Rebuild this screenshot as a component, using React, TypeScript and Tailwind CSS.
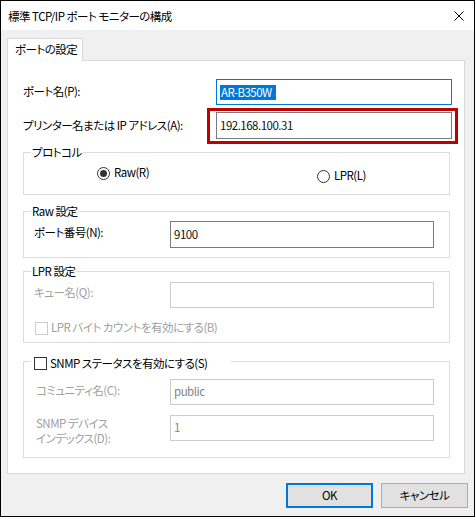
import React from "react";

const Input = ({ w, h, value, disabled, selected }: { w: string; h: string; value?: string; disabled?: boolean; selected?: boolean }) => (
  <div
    className={`${w} ${h} bg-white flex items-center pl-[3px] ${
      selected ? "border border-[#0078d7]" : disabled ? "border border-[#cccccc]" : "border border-[#7a7a7a]"
    }`}
  >
    {selected ? (
      <span className="bg-[#0078d7] text-white leading-[15px] pr-[4px] pl-[1px]">{value}</span>
    ) : (
      <span className={disabled ? "text-[#838383]" : "text-[#111]"}>{value}</span>
    )}
  </div>
);

const Radio = ({ checked }: { checked?: boolean }) => (
  <div className="w-[13px] h-[13px] rounded-full border border-[#333] flex items-center justify-center bg-white">
    {checked && <div className="w-[7px] h-[7px] rounded-full bg-[#333]" />}
  </div>
);

const Check = ({ disabled }: { disabled?: boolean }) => (
  <div className={`w-[13px] h-[13px] shrink-0 bg-white border ${disabled ? "border-[#cccccc]" : "border-[#333]"}`} />
);

export default function App() {
  return (
    <div className="w-[475px] h-[517px] border border-black bg-[#f0f0f0] flex flex-col text-[11.5px] tracking-[-0.5px] text-black font-['Noto_Sans_CJK_JP',sans-serif] [font-feature-settings:'palt']">
      {/* title bar */}
      <div className="h-[29px] bg-white flex items-center justify-between pl-[7px] pr-[10px] shrink-0">
        <span className="leading-[16px]">標準 TCP/IP ポート モニターの構成</span>
        <svg width="10" height="10" viewBox="0 0 10 10" className="mt-[1px]">
          <path d="M0.5 0.5 L9.5 9.5 M9.5 0.5 L0.5 9.5" stroke="#000" strokeWidth="1" />
        </svg>
      </div>

      {/* tab */}
      <div className="ml-[6px] mt-[8px] -mb-px w-[76px] h-[23px] bg-white border-t border-l border-r border-[#d9d9d9] relative z-10 flex items-center pl-[7px] whitespace-nowrap">
        ポートの設定
      </div>

      {/* panel */}
      <div className="ml-[6px] w-[458px] h-[414px] bg-white border border-[#d9d9d9] flex flex-col">
        <div className="flex items-center pl-[15px] mt-[18px]">
          <span className="w-[193px]">ポート名(P):</span>
          <Input w="w-[236px]" h="h-[26px]" value="AR-B350W" selected />
        </div>
        <div className="flex items-center pl-[15px] mt-[7px]">
          <span className="w-[193px]">プリンター名または IP アドレス(A):</span>
          <div className="relative">
            <Input w="w-[236px]" h="h-[27px]" value="192.168.100.31" />
            <div className="absolute -left-[9px] -right-[6px] -top-[4px] -bottom-[5px] border-[3px] border-[#c00000]" />
          </div>
        </div>

        {/* protocol */}
        <div className="ml-[15px] mt-[13px] w-[427px] h-[43px] border border-[#dcdcdc] flex flex-col">
          <span className="-mt-[9px] ml-[7px] px-[1px] leading-[16px] bg-white w-fit">プロトコル</span>
          <div className="flex items-start mt-[5px] pl-[73px]">
            <div className="w-[220px] flex items-center gap-[4px] h-[16px]">
              <Radio checked />
              <span>Raw(R)</span>
            </div>
            <div className="flex items-center gap-[4px] h-[16px] mt-[3px]">
              <Radio />
              <span>LPR(L)</span>
            </div>
          </div>
        </div>

        {/* raw */}
        <div className="ml-[15px] mt-[16px] w-[427px] h-[47px] border border-[#dcdcdc] flex flex-col">
          <span className="-mt-[9px] ml-[7px] px-[1px] leading-[16px] bg-white w-fit">Raw 設定</span>
          <div className="flex items-start mt-[2px] pl-[10px]">
            <span className="w-[136px] leading-[16px] mt-[3px]">ポート番号(N):</span>
            <Input w="w-[264px]" h="h-[27px]" value="9100" />
          </div>
        </div>

        {/* lpr */}
        <div className="ml-[15px] mt-[13px] w-[427px] h-[72px] border border-[#dcdcdc] flex flex-col">
          <span className="-mt-[9px] ml-[7px] px-[1px] leading-[16px] bg-white w-fit">LPR 設定</span>
          <div className="flex items-start mt-[3px] pl-[10px]">
            <span className="w-[136px] leading-[16px] mt-[2px] text-[#a0a0a0]">キュー名(Q):</span>
            <Input w="w-[264px]" h="h-[26px]" disabled />
          </div>
          <div className="flex items-center h-[16px] mt-[12px] pl-[11px] gap-[3px] text-[#a0a0a0]">
            <Check disabled />
            <span>LPR バイト カウントを有効にする(B)</span>
          </div>
        </div>

        {/* snmp */}
        <div className="ml-[15px] mt-[18px] w-[427px] h-[97px] border border-[#dcdcdc] flex flex-col">
          <div className="-mt-[7px] ml-[7px] w-[200px] pl-[3px] h-[16px] bg-white flex items-center gap-[3px]">
            <Check />
            <span className="leading-[16px]">SNMP ステータスを有効にする(S)</span>
          </div>
          <div className="flex items-start mt-[8px] pl-[12px]">
            <span className="w-[134px] leading-[16px] mt-[3px] text-[#a0a0a0]">コミュニティ名(C):</span>
            <Input w="w-[264px]" h="h-[26px]" value="public" disabled />
          </div>
          <div className="flex items-start mt-[10px] pl-[12px]">
            <div className="w-[134px] flex flex-col text-[#a0a0a0] mt-[1px]">
              <span className="leading-[15px] h-[15px]">SNMP デバイス</span>
              <span className="leading-[15px] h-[15px]">インデックス(D):</span>
            </div>
            <div className="w-[264px] h-[26px] bg-white border border-[#cccccc] flex items-start pl-[3px] pt-[3px] text-[#838383] leading-[16px]">
              1
            </div>
          </div>
        </div>
      </div>

      {/* buttons */}
      <div className="flex justify-end gap-[8px] pr-[6px] mt-[9px]">
        <button className="w-[87px] h-[25px] bg-[#e1e1e1] border-2 border-[#0078d7] flex items-center justify-center">OK</button>
        <button className="w-[87px] h-[25px] bg-[#e1e1e1] border border-[#adadad] flex items-center justify-center">キャンセル</button>
      </div>
    </div>
  );
}
